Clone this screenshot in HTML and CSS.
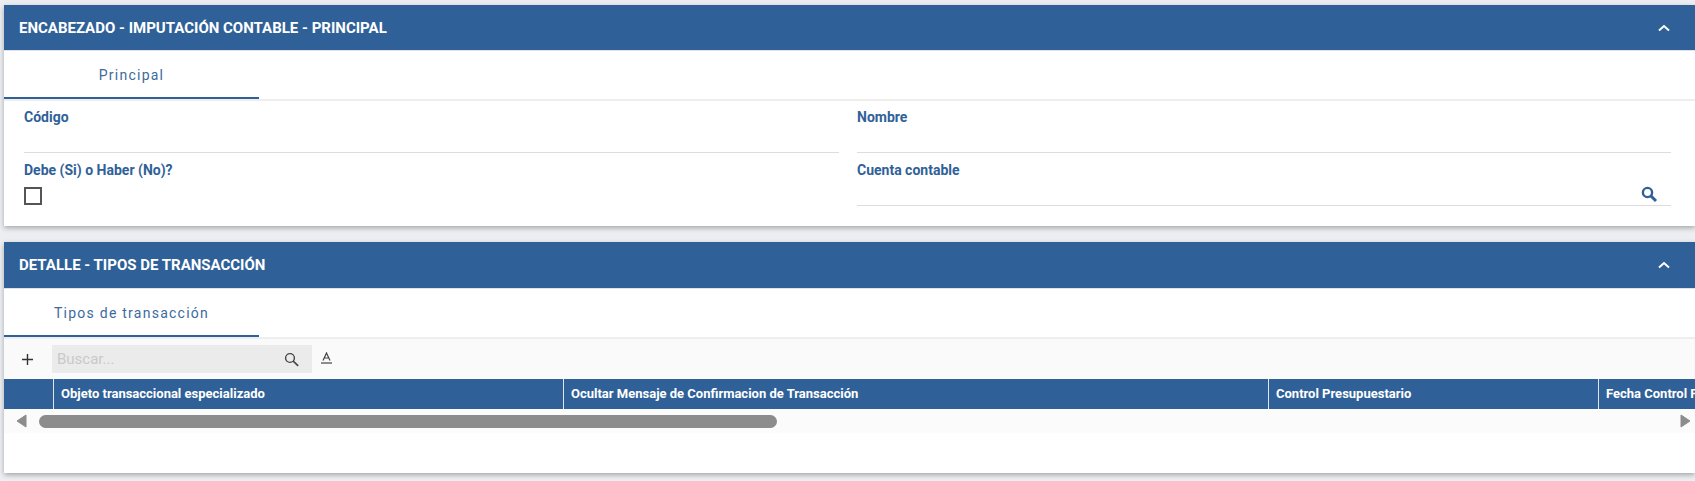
FILE: index.html
```html
<!DOCTYPE html>
<html lang="es">
<head>
  <meta charset="UTF-8">
  <title>Imputación contable</title>
  <link rel="stylesheet" href="styles.css">
</head>
<body>

  <section class="panel panel-main">
    <header class="panel-head">
      <h2>ENCABEZADO - IMPUTACIÓN CONTABLE - PRINCIPAL</h2>
      <svg class="chevron" width="12" height="8" viewBox="0 0 12 8"><path d="M1 6.5 6 2l5 4.5" fill="none" stroke="#fff" stroke-width="2"/></svg>
    </header>
    <div class="tabs">
      <div class="tab">Principal</div>
    </div>
    <div class="form-grid">
      <div class="field">
        <label>Código</label>
        <div class="field-line"></div>
      </div>
      <div class="field">
        <label>Nombre</label>
        <div class="field-line"></div>
      </div>
      <div class="field field-check">
        <label>Debe (Si) o Haber (No)?</label>
        <span class="checkbox"></span>
      </div>
      <div class="field">
        <label>Cuenta contable</label>
        <div class="field-line">
          <svg class="lookup" width="17" height="17" viewBox="0 0 17 17"><circle cx="6.5" cy="6.5" r="4.6" fill="none" stroke="#2f6198" stroke-width="2.4"/><path d="m10 10 5 5" stroke="#2f6198" stroke-width="3"/></svg>
        </div>
      </div>
    </div>
  </section>

  <section class="panel panel-detail">
    <header class="panel-head">
      <h2>DETALLE - TIPOS DE TRANSACCIÓN</h2>
      <svg class="chevron" width="12" height="8" viewBox="0 0 12 8"><path d="M1 6.5 6 2l5 4.5" fill="none" stroke="#fff" stroke-width="2"/></svg>
    </header>
    <div class="tabs">
      <div class="tab">Tipos de transacción</div>
    </div>
    <div class="toolbar">
      <svg class="add" width="11" height="11" viewBox="0 0 11 11"><path d="M5.5 0v11M0 5.5h11" stroke="#333" stroke-width="1.4"/></svg>
      <div class="search">
        <span>Buscar...</span>
        <svg width="15" height="15" viewBox="0 0 15 15"><circle cx="6" cy="6" r="4.4" fill="none" stroke="#444" stroke-width="1.4"/><path d="m9.2 9.2 5 4.6" stroke="#444" stroke-width="1.6"/></svg>
      </div>
      <svg class="font-btn" width="11" height="12" viewBox="0 0 11 12"><path d="M2 8.5 5.5 1 9 8.5M3.2 6h4.6" fill="none" stroke="#444" stroke-width="1.2"/><path d="M0 11h11" stroke="#444" stroke-width="1.2"/></svg>
    </div>
    <div class="grid-head">
      <div class="col col-select"></div>
      <div class="col col-obj">Objeto transaccional especializado</div>
      <div class="col col-msg">Ocultar Mensaje de Confirmacion de Transacción</div>
      <div class="col col-ctrl">Control Presupuestario</div>
      <div class="col col-date">Fecha Control Presupuestario</div>
    </div>
    <div class="scrollbar">
      <svg class="arrow" width="11" height="14" viewBox="0 0 11 14"><path d="M10 1v12L1 7z" fill="#8c8c8c" stroke="#8c8c8c" stroke-linejoin="round"/></svg>
      <span class="thumb"></span>
      <svg class="arrow arrow-right" width="11" height="14" viewBox="0 0 11 14"><path d="M1 1v12l9-6z" fill="#8c8c8c" stroke="#8c8c8c" stroke-linejoin="round"/></svg>
    </div>
  </section>

</body>
</html>
```

FILE: styles.css
```css
* {
  box-sizing: border-box;
}
html, body {
  height: 481px;
  overflow: hidden;
}
body {
  margin: 0;
  padding: 5px 0 0 4px;
  background: #eceef2;
  font-family: Roboto, Arial, sans-serif;
  color: #2f6198;
}
.panel {
  background: #fff;
  box-shadow: 0 2px 5px rgba(0, 0, 0, 0.3);
}
.panel-main {
  height: 221px;
  margin-bottom: 16px;
}
.panel-detail {
  height: 231px;
}
.panel-head {
  height: 46px;
  background: #2f6198;
  display: flex;
  align-items: center;
  justify-content: space-between;
  padding: 0 25px 0 15px;
  border-bottom: 1px solid #dfe3e8;
}
.panel-detail .panel-head {
  height: 47px;
}
.panel-head h2 {
  margin: 0;
  font-size: 15px;
  font-weight: 700;
  color: #fff;
}
.tabs {
  height: 50px;
  border-bottom: 2px solid #eee;
}
.tab {
  width: 255px;
  height: 48px;
  line-height: 48px;
  border-bottom: 2px solid #2f6198;
  text-align: center;
  font-size: 14px;
  letter-spacing: 1.25px;
  color: #3c6aa0;
}
.form-grid {
  display: grid;
  grid-template-columns: 815px 814px;
  grid-template-rows: 53px 53px;
  column-gap: 18px;
  padding: 8px 0 0 20px;
}
.field label {
  display: block;
  height: 32px;
  line-height: 16px;
  font-size: 14px;
  font-weight: 700;
}
.field-line {
  height: 12px;
  border-bottom: 1px solid #ddd;
  position: relative;
}
.lookup {
  position: absolute;
  right: 13px;
  top: -8px;
}
.field-check label {
  height: 25px;
}
.checkbox {
  display: block;
  width: 18px;
  height: 18px;
  border: 2px solid #555;
}
.toolbar {
  height: 40px;
  background: #fafafa;
  display: flex;
  align-items: center;
  padding-left: 18px;
}
.add {
  margin-right: 19px;
}
.search {
  width: 260px;
  height: 28px;
  background: #ebebeb;
  display: flex;
  align-items: center;
  justify-content: space-between;
  padding: 0 13px 0 5px;
  font-size: 15px;
  color: #c9c9c9;
  margin-right: 9px;
}
.font-btn {
  margin-top: -2px;
}
.grid-head {
  height: 30px;
  background: #2f6198;
  display: flex;
  overflow: hidden;
  font-size: 13px;
  font-weight: 700;
  color: #fff;
  white-space: nowrap;
}
.col {
  line-height: 30px;
  padding-left: 7px;
  border-right: 1px solid #dfe6ee;
  flex: none;
}
.col-select {
  width: 50px;
}
.col-obj {
  width: 510px;
}
.col-msg {
  width: 705px;
}
.col-ctrl {
  width: 330px;
}
.col-date {
  width: 300px;
  border-right: 0;
}
.scrollbar {
  height: 24px;
  background: #fbfbfb;
  display: flex;
  align-items: center;
  padding-left: 12px;
}
.thumb {
  width: 738px;
  height: 13px;
  margin-left: 12px;
  background: #8c8c8c;
  border-radius: 7px;
}
.arrow-right {
  margin-left: 903px;
}
```
